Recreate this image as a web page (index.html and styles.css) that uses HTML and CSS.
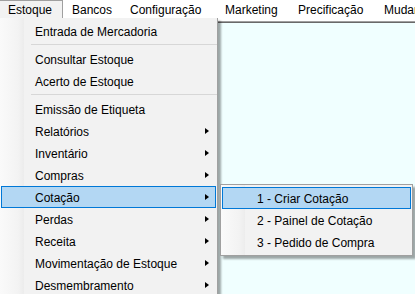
FILE: index.html
```html
<!DOCTYPE html>
<html lang="pt">
<head>
<meta charset="utf-8">
<title>Estoque</title>
<link rel="stylesheet" href="styles.css">
</head>
<body>
<div class="app">
  <div class="menubar">
    <div class="top-item w-estoque open">Estoque</div>
    <div class="top-item w-bancos">Bancos</div>
    <div class="top-item w-config">Configuração</div>
    <div class="top-item w-marketing">Marketing</div>
    <div class="top-item w-prec">Precificação</div>
    <div class="top-item w-muda">Mudança</div>
  </div>
  <div class="workspace"></div>

  <div class="dropdown main-menu">
    <div class="item">Entrada de Mercadoria</div>
    <div class="sep"></div>
    <div class="item">Consultar Estoque</div>
    <div class="item">Acerto de Estoque</div>
    <div class="sep"></div>
    <div class="item">Emissão de Etiqueta</div>
    <div class="item sub">Relatórios</div>
    <div class="item sub">Inventário</div>
    <div class="item sub">Compras</div>
    <div class="item sub selected">Cotação</div>
    <div class="item sub">Perdas</div>
    <div class="item sub">Receita</div>
    <div class="item sub">Movimentação de Estoque</div>
    <div class="item sub">Desmembramento</div>
  </div>

  <div class="dropdown sub-menu">
    <div class="item selected">1 - Criar Cotação</div>
    <div class="item">2 - Painel de Cotação</div>
    <div class="item">3 - Pedido de Compra</div>
  </div>
</div>
</body>
</html>
```

FILE: styles.css
```css
html, body {
  margin: 0;
  padding: 0;
}
body {
  width: 415px;
  height: 294px;
  overflow: hidden;
  background: #f0ffff;
  font-family: "Liberation Sans", Arial, sans-serif;
  font-size: 12px;
  color: #000;
}
.app {
  position: relative;
  width: 415px;
  height: 294px;
  display: flex;
  flex-direction: column;
}
.menubar {
  display: flex;
  height: 21px;
  background: #ffffff;
  white-space: nowrap;
  overflow: hidden;
}
.top-item {
  flex: none;
  box-sizing: border-box;
  height: 19px;
  line-height: 20px;
  padding-left: 8px;
}
.top-item.open {
  background: #f2f2f2;
  border-right: 1px solid #a0a0a0;
  border-top: 1px solid #a0a0a0;
  line-height: 19px;
}
.w-estoque { width: 63px; }
.w-bancos { width: 59px; padding-left: 9px; }
.w-config { width: 95px; }
.w-marketing { width: 73px; }
.w-prec { width: 86px; }
.w-muda { width: 80px; }

.workspace {
  flex: 1;
  border-top: 1px solid #a0a0a0;
  box-shadow: inset 0 1px 0 #696969;
  background: #f0ffff;
}

.dropdown {
  position: absolute;
  box-sizing: border-box;
  background: linear-gradient(to right, #fafafa 0, #f3f3f3 18px, #ececec 24px, #f2f2f2 24px, #f2f2f2 100%);
  border: 1px solid #a0a0a0;
  box-shadow: 3px 3px 2px rgba(0, 0, 0, 0.35);
  white-space: nowrap;
}
.main-menu {
  left: 0;
  top: 18px;
  width: 218px;
  padding: 2px 0 2px;
  border-top: none;
  border-left: none;
}
.sub-menu {
  left: 220px;
  top: 184px;
  width: 193px;
  padding: 2px 0;
}
.item {
  position: relative;
  box-sizing: border-box;
  height: 22px;
  margin: 0 1px;
  padding-left: 34px;
  padding-top: 1px;
  border: 1px solid transparent;
  line-height: 20px;
}
.main-menu .item {
  padding-left: 33px;
}
.item.selected {
  background: #b3d7f3;
  border-color: #0078d7;
}
.item.sub::after {
  content: "";
  position: absolute;
  left: 203px;
  top: 7px;
  width: 0;
  height: 0;
  border-top: 3.5px solid transparent;
  border-bottom: 3.5px solid transparent;
  border-left: 4px solid #000;
}
.sep {
  height: 6px;
  margin-left: 31px;
  background: linear-gradient(#d7d7d7, #d7d7d7) no-repeat 0 2px / 100% 1px;
}
```
